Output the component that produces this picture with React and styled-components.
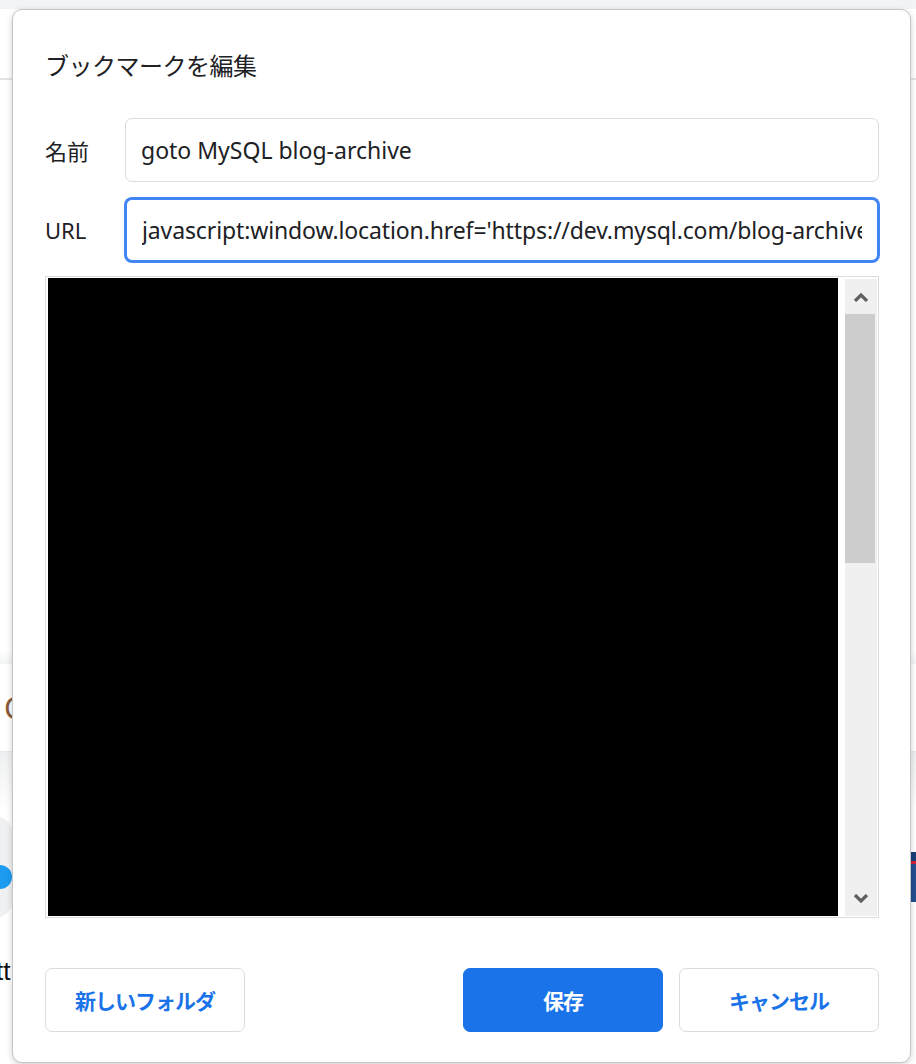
import React from "react";
import styled, { createGlobalStyle } from "styled-components";

const GlobalStyle = createGlobalStyle`
  html, body {
    margin: 0;
    padding: 0;
    background: #ffffff;
  }
  body {
    font-family: "Noto Sans", "Noto Sans CJK JP", sans-serif;
    color: #202124;
  }
  * {
    box-sizing: border-box;
  }
`;

const Page = styled.div`
  position: relative;
  width: 916px;
  height: 1064px;
  overflow: hidden;
  background: #ffffff;
`;

const TopStrip = styled.div`
  height: 9px;
  background: #f1f3f4;
`;

const Header = styled.div`
  height: 71px;
  border-bottom: 2px solid #e3e4e6;
`;

const Shade = styled.div`
  margin-top: 570px;
  height: 14px;
  background: linear-gradient(#ffffff, #f1f3f4);
`;

const Card = styled.div`
  height: 88px;
  display: flex;
  align-items: center;
  padding-left: 4px;
  font-size: 30px;
  color: #8a5a3a;
  background: #ffffff;
  border-bottom: 1px solid #e8e8e8;
`;

const GrayBand = styled.div`
  height: 60px;
  background: linear-gradient(#eeeff0, #ffffff);
`;

const LogoRow = styled.div`
  height: 110px;
  display: flex;
  justify-content: space-between;
  align-items: center;
`;

const LogoBlob = styled.div`
  width: 44px;
  height: 104px;
  border-radius: 52px;
  margin-left: -30px;
  background: #eef0f2;
  display: flex;
  align-items: center;
  justify-content: flex-end;
  padding-right: 2px;
  padding-top: 20px;
  &::after {
    content: "";
    width: 14px;
    height: 24px;
    border-radius: 0 12px 12px 0;
    background: #1d9bf0;
  }
`;

const Flag = styled.div`
  width: 8px;
  height: 50px;
  margin-top: 20px;
  background: linear-gradient(#1c3f7a 0 18%, #d0203a 18% 24%, #23508f 24% 100%);
`;

const TailText = styled.div`
  font-family: "Liberation Sans", sans-serif;
  font-size: 26px;
  line-height: 30px;
  color: #111;
  margin-left: -4px;
  margin-top: 34px;
`;

const Dialog = styled.div`
  position: absolute;
  top: 9px;
  left: 12px;
  width: 899px;
  height: 1054px;
  background: #ffffff;
  border: 1px solid #c4c6c8;
  border-radius: 10px;
  box-shadow: 0 2px 6px rgba(0, 0, 0, 0.18);
  padding: 37px 31px 30px 32px;
  display: flex;
  flex-direction: column;
`;

const Title = styled.h1`
  margin: 0 0 35px;
  font-family: "Noto Sans CJK JP", sans-serif;
  font-size: 24px;
  letter-spacing: -0.5px;
  font-weight: 400;
  line-height: 36px;
  color: #202124;
`;

const Form = styled.div`
  display: grid;
  grid-template-columns: 80px 1fr;
  row-gap: 16px;
  align-items: center;
`;

const Label = styled.label`
  font-family: "Noto Sans", "Noto Sans CJK JP", sans-serif;
  font-size: 22px;
  color: #202124;
`;

const Field = styled.input`
  width: 100%;
  height: 64px;
  padding: 0 15px;
  font-family: "Noto Sans", "Noto Sans CJK JP", sans-serif;
  font-size: 23px;
  letter-spacing: ${(p) => (p.$focused ? "-0.12px" : "0")};
  color: #202124;
  background: #ffffff;
  border: ${(p) => (p.$focused ? "2px solid #4285f4" : "1px solid #dadce0")};
  box-shadow: ${(p) => (p.$focused ? "0 0 0 1px #4285f4" : "none")};
  border-radius: 7px;
  outline: none;
`;

const Tree = styled.div`
  margin-top: 14px;
  height: 642px;
  border: 1px solid #dadce0;
  display: flex;
  padding: 1px 1px 1px 2px;
  gap: 7px;
`;

const TreeView = styled.div`
  flex: 1;
  background: #000000;
`;

const ScrollBar = styled.div`
  width: 32px;
  margin-top: 1px;
  background: #f0f0f0;
  display: flex;
  flex-direction: column;
`;

const ArrowCell = styled.div`
  height: 35px;
  display: flex;
  align-items: center;
  justify-content: center;
`;

const Thumb = styled.div`
  height: 249px;
  margin-right: 2px;
  background: #cdcdcd;
`;

const Track = styled.div`
  flex: 1;
`;

const Footer = styled.div`
  margin-top: auto;
  display: flex;
  align-items: center;
  gap: 16px;
`;

const Spacer = styled.div`
  flex: 1;
`;

const Button = styled.button`
  width: 200px;
  height: 64px;
  border-radius: 7px;
  font-family: "Noto Sans CJK JP", sans-serif;
  font-size: 21px;
  letter-spacing: -1px;
  font-weight: 700;
  cursor: pointer;
  border: 1px solid ${(p) => (p.$primary ? "#1a73e8" : "#dadce0")};
  background: ${(p) => (p.$primary ? "#1a73e8" : "#ffffff")};
  color: ${(p) => (p.$primary ? "#ffffff" : "#1a73e8")};
`;

const Chevron = ({ up }) => (
  <svg width="16" height="10" viewBox="0 0 16 10">
    <polyline
      points={up ? "2,9 8,3 14,9" : "2,1 8,7 14,1"}
      fill="none"
      stroke="#606060"
      strokeWidth="3.2"
      strokeLinejoin="miter"
    />
  </svg>
);

export default function App() {
  return (
    <>
      <GlobalStyle />
      <Page>
        <TopStrip />
        <Header />
        <Shade />
        <Card>C</Card>
        <GrayBand />
        <LogoRow>
          <LogoBlob />
          <Flag />
        </LogoRow>
        <TailText>tt</TailText>

        <Dialog>
          <Title>ブックマークを編集</Title>
          <Form>
            <Label>名前</Label>
            <Field type="text" defaultValue="goto MySQL blog-archive" readOnly />
            <Label>URL</Label>
            <Field
              $focused
              type="text"
              defaultValue="javascript:window.location.href='https://dev.mysql.com/blog-archive'"
              readOnly
            />
          </Form>
          <Tree>
            <TreeView />
            <ScrollBar>
              <ArrowCell>
                <Chevron up />
              </ArrowCell>
              <Thumb />
              <Track />
              <ArrowCell>
                <Chevron />
              </ArrowCell>
            </ScrollBar>
          </Tree>
          <Footer>
            <Button>新しいフォルダ</Button>
            <Spacer />
            <Button $primary>保存</Button>
            <Button>キャンセル</Button>
          </Footer>
        </Dialog>
      </Page>
    </>
  );
}
